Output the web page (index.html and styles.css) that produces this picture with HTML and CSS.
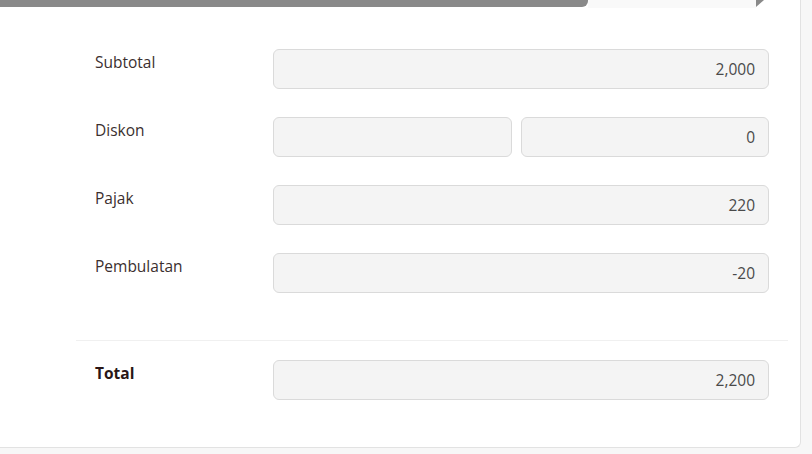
FILE: index.html
```html
<!DOCTYPE html>
<html>
<head>
<meta charset="utf-8">
<link rel="stylesheet" href="styles.css">
</head>
<body>
<div class="card">
  <div class="scrollbar">
    <div class="thumb"></div>
    <div class="track"></div>
    <div class="arrow"></div>
  </div>
  <div class="form">
    <div class="row">
      <div class="label">Subtotal</div>
      <div class="fields"><div class="input">2,000</div></div>
    </div>
    <div class="row">
      <div class="label">Diskon</div>
      <div class="fields split"><div class="input small"></div><div class="input">0</div></div>
    </div>
    <div class="row">
      <div class="label">Pajak</div>
      <div class="fields"><div class="input">220</div></div>
    </div>
    <div class="row">
      <div class="label">Pembulatan</div>
      <div class="fields"><div class="input">-20</div></div>
    </div>
    <div class="divider"></div>
    <div class="row total">
      <div class="label">Total</div>
      <div class="fields"><div class="input">2,200</div></div>
    </div>
  </div>
</div>
</body>
</html>
```
FILE: styles.css
```css
html, body {
  margin: 0;
  padding: 0;
}
body {
  background: #f7f7f7;
  font-family: "Open Sans", "Liberation Sans", sans-serif;
  font-size: 15.5px;
  width: 812px;
  height: 454px;
  overflow: hidden;
}
.card {
  width: 800px;
  height: 447px;
  background: #fff;
  border-right: 1px solid #e2e2e2;
  border-bottom: 1px solid #e2e2e2;
  border-bottom-right-radius: 6px;
}
.scrollbar {
  display: flex;
  height: 7px;
  width: 764px;
}
.thumb {
  width: 588px;
  height: 7px;
  background: #898989;
  border-bottom-right-radius: 6px;
}
.track {
  flex: 1;
  height: 8px;
  background: #f9f9f9;
}
.arrow {
  width: 8px;
  height: 7px;
  background: #898989;
  border-bottom-right-radius: 5px;
  clip-path: polygon(0 0, 100% 0, 0 100%);
}
.form {
  margin-left: 76px;
  width: 712px;
  padding-top: 42px;
}
.row {
  display: flex;
  padding: 0 19px;
  margin-bottom: 28px;
}
.row.total {
  margin-bottom: 0;
}
.label {
  width: 178px;
  flex: none;
  color: #3b2f2f;
  padding-top: 3px;
  line-height: 20px;
}
.fields {
  flex: 1;
  display: flex;
  gap: 9px;
}
.input {
  flex: 1;
  height: 38px;
  box-sizing: content-box;
  background: #f4f4f4;
  border: 1px solid #dadada;
  border-radius: 6px;
  text-align: right;
  padding: 0 13px;
  line-height: 38px;
  color: #4a4a4a;
}
.input.small {
  flex: none;
  width: 211px;
}
.divider {
  height: 1px;
  background: #f0f0f0;
  margin-top: 47px;
  margin-bottom: 19px;
}
.total .label {
  font-weight: bold;
  color: #2a1616;
}
```
